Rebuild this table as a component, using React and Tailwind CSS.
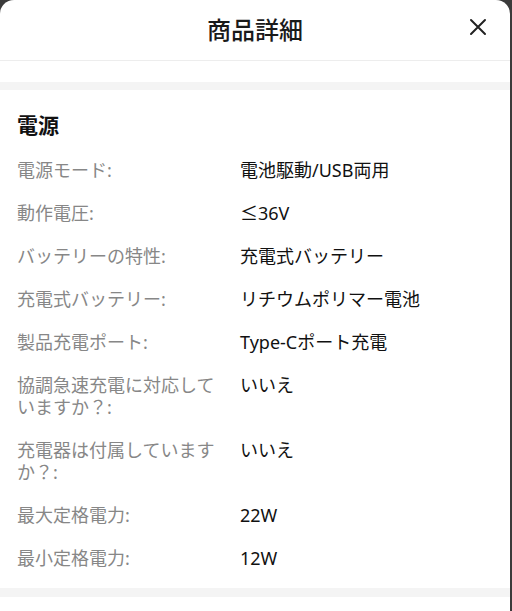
const specs = [
  { label: "電源モード:", value: "電池駆動/USB両用" },
  { label: "動作電圧:", value: "≤36V" },
  { label: "バッテリーの特性:", value: "充電式バッテリー" },
  { label: "充電式バッテリー:", value: "リチウムポリマー電池" },
  { label: "製品充電ポート:", value: "Type-Cポート充電" },
  { label: "協調急速充電に対応していますか？:", value: "いいえ" },
  { label: "充電器は付属していますか？:", value: "いいえ" },
  { label: "最大定格電力:", value: "22W" },
  { label: "最小定格電力:", value: "12W" },
];

export default function App() {
  return (
    <div
      className="h-[611px] w-[512px] overflow-hidden bg-[#3b3b3b]"
      style={{ fontFamily: '"Noto Sans", "Noto Sans CJK JP", sans-serif' }}
    >
      <div className="h-full w-[510px] overflow-hidden rounded-t-[14px] bg-white">
        <header className="relative flex h-[61px] items-center justify-center border-b border-[#ededed]">
          <h1 className="text-[24px] font-medium text-[#1a1a1a]">商品詳細</h1>
          <button className="absolute right-[22px] top-[17px] flex h-[20px] w-[20px] items-center justify-center text-[#222]">
            <svg viewBox="0 0 20 20" width="20" height="20" fill="none" stroke="currentColor" strokeWidth="2" strokeLinecap="round">
              <path d="M3 3 L17 17 M17 3 L3 17" />
            </svg>
          </button>
        </header>

        <div className="h-[21px]" />
        <div className="h-[8px] bg-[#f4f4f4]" />

        <section className="px-[17px] pb-[19px] pt-[21px]">
          <h2 className="text-[21px] font-bold leading-[28px] text-[#111]">電源</h2>
          <dl className="mt-[20px] flex flex-col gap-[21px] text-[18px] leading-[22px]">
            {specs.map((s) => (
              <div key={s.label} className="grid grid-cols-[209px_1fr] gap-x-[14px]">
                <dt className="text-[#878787]">{s.label}</dt>
                <dd className="text-[#111]">{s.value}</dd>
              </div>
            ))}
          </dl>
        </section>

        <div className="h-[9px] bg-[#f4f4f4]" />
      </div>
    </div>
  );
}
